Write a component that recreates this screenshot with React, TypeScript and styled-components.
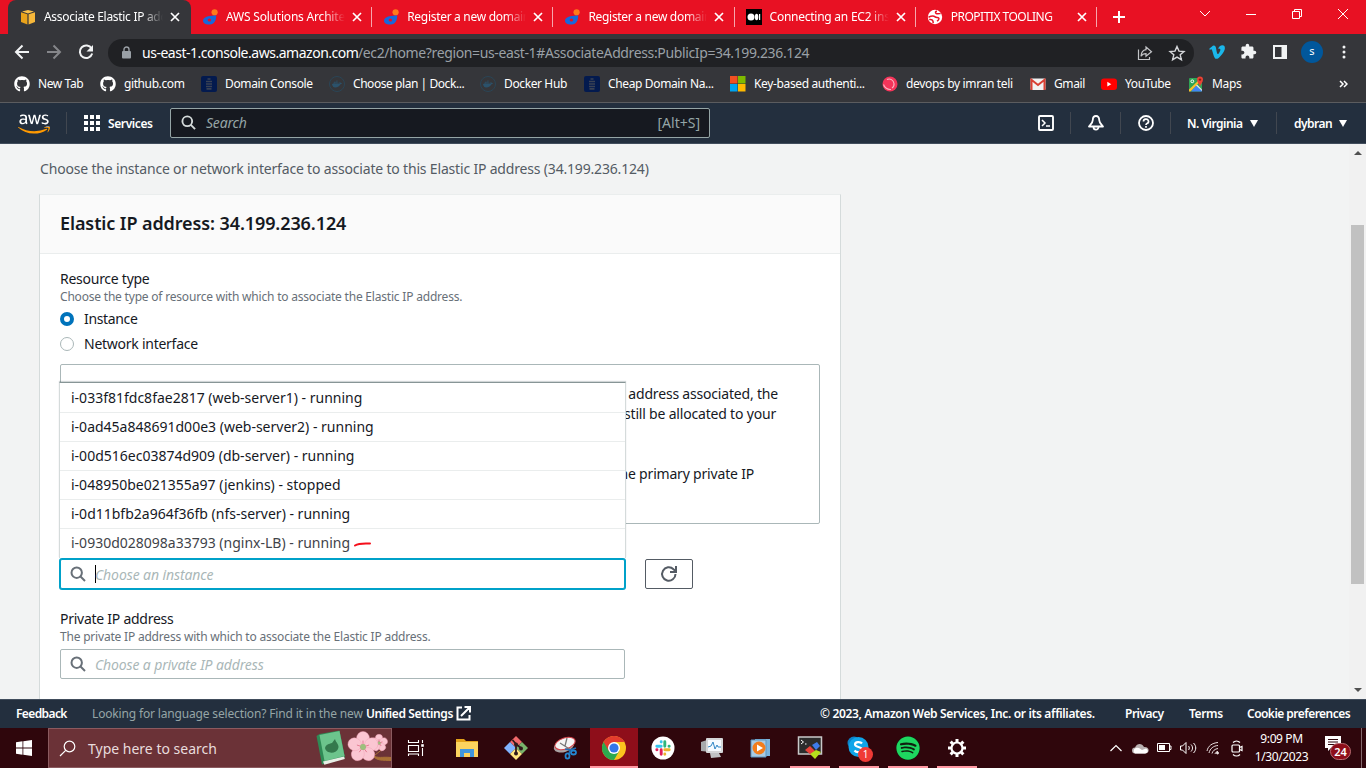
import React from "react";
import styled, { createGlobalStyle, css } from "styled-components";
import { FaAws, FaDocker, FaGithub, FaSpotify, FaVimeoV } from "react-icons/fa";
import { MdExtension } from "react-icons/md";

const UI = `"Noto Sans", "Open Sans", sans-serif`;

const GlobalStyle = createGlobalStyle`
  * { box-sizing: border-box; }
  body { margin: 0; font-family: ${UI}; overflow: hidden; }
  svg { display: block; flex: none; }
`;

const Screen = styled.div`
  width: 1366px;
  height: 768px;
  display: flex;
  flex-direction: column;
  overflow: hidden;
  background: #f2f3f3;
`;

const Txt = styled.span<{ $size?: number; $ls?: number; $w?: number; $color?: string; $bold?: boolean; $italic?: boolean }>`
  flex: none;
  white-space: nowrap;
  font-size: ${(p) => p.$size ?? 12}px;
  letter-spacing: ${(p) => p.$ls ?? 0}px;
  ${(p) => p.$w && css`width: ${p.$w}px;`}
  ${(p) => p.$color && css`color: ${p.$color};`}
  ${(p) => p.$bold && css`font-weight: 600;`}
  ${(p) => p.$italic && css`font-style: italic;`}
`;

/* ---------- Browser chrome ---------- */

const TabStrip = styled.div`
  height: 34px;
  flex: none;
  display: flex;
  padding-left: 8px;
  background: #e81123;
  color: #fff;
`;

const Tab = styled.div<{ $active?: boolean; $divider?: boolean }>`
  position: relative;
  width: ${(p) => (p.$active ? 183 : 181.2)}px;
  margin-right: ${(p) => (p.$active ? -1 : 0)}px;
  flex: none;
  display: flex;
  align-items: center;
  padding-left: 12px;
  border-radius: 8px 8px 0 0;
  background: ${(p) => (p.$active ? "#35363a" : "transparent")};
  ${(p) =>
    p.$divider &&
    css`
      &::after {
        content: "";
        position: absolute;
        right: -1px;
        top: 7px;
        width: 1px;
        height: 20px;
        background: #f6a6ad;
      }
    `}
`;

const TabTitle = styled.div`
  width: 119px;
  margin: 0 6px 0 8px;
  overflow: hidden;
  white-space: nowrap;
  font-size: 12px;
  line-height: 18px;
  mask-image: linear-gradient(to right, #000 98px, transparent 119px);
`;

const NewTab = styled.div`
  display: flex;
  align-items: center;
  padding-left: 16px;
`;

const WindowButtons = styled.div`
  margin-left: auto;
  height: 28px;
  display: flex;
  align-items: center;
  svg { width: 46px; }
`;

const Toolbar = styled.div`
  height: 35px;
  flex: none;
  display: flex;
  align-items: center;
  background: #35363a;
  color: #e8eaed;
`;

const NavButtons = styled.div`
  width: 108px;
  display: flex;
  padding-left: 13px;
  gap: 14px;
`;

const AddressBar = styled.div`
  width: 1086px;
  height: 28px;
  margin-top: 2px;
  border-radius: 14px;
  background: #202124;
  display: flex;
  align-items: center;
  padding: 0 8px 0 13px;
  line-height: 18px;
`;

const Lock = styled.svg`
  margin-right: 10px;
`;

const AddressActions = styled.div`
  margin-left: auto;
  display: flex;
  gap: 14px;
`;

const Extensions = styled.div`
  display: flex;
  align-items: center;
  padding-left: 14px;
`;

const PuzzleSlot = styled.div`
  margin: 0 16px 0 14px;
`;

const MenuDots = styled.svg`
  margin-left: 5px;
`;

const Avatar = styled.div`
  width: 22px;
  height: 22px;
  margin: 0 14px 0 14px;
  border-radius: 50%;
  background: #01579b;
  color: #fff;
  font-size: 11px;
  line-height: 20px;
  text-align: center;
`;

const BookmarkBar = styled.div`
  height: 34px;
  flex: none;
  display: flex;
  align-items: center;
  padding: 0 18px 4px 14px;
  background: #35363a;
  border-bottom: 1px solid #5b5c5f;
  color: #fff;
`;

const Bookmark = styled.div<{ $w: number }>`
  width: ${(p) => p.$w}px;
  flex: none;
  display: flex;
  align-items: center;
  gap: 8px;
`;

const Overflow = styled.div`
  margin-left: auto;
`;

/* ---------- AWS header ---------- */

const AwsNav = styled.div`
  height: 41px;
  flex: none;
  display: flex;
  align-items: center;
  background: #232f3e;
  border-bottom: 1px solid #414d5c;
  color: #fff;
`;

const AwsLogo = styled(FaAws)`
  width: 32px;
  height: 26px;
  margin: 1px 16px 0 18px;
  path { fill: url(#awsTone); }
`;

const NavDivider = styled.div`
  width: 1px;
  height: 22px;
  background: #414750;
`;

const Services = styled.div`
  display: flex;
  align-items: center;
  width: 103px;
  padding-left: 17px;
  gap: 8px;
`;

const NavSearch = styled.div`
  width: 540px;
  height: 30px;
  display: flex;
  align-items: center;
  padding: 0 9px 1px 10px;
  gap: 10px;
  background: #161920;
  border: 1px solid #95a5a6;
  border-radius: 2px;
  color: #95a5a6;
`;

const Shortcut = styled(Txt)`
  margin-left: auto;
`;

const NavRight = styled.div`
  margin-left: auto;
  display: flex;
  align-items: center;
`;

const NavItem = styled.div<{ $w: number; $pl?: number }>`
  width: ${(p) => p.$w}px;
  padding-left: ${(p) => p.$pl ?? 0}px;
  display: flex;
  align-items: center;
  justify-content: ${(p) => (p.$pl ? "flex-start" : "center")};
  gap: 5px;
`;

/* ---------- Page ---------- */

const Page = styled.div`
  height: 555px;
  flex: none;
  display: flex;
  overflow: hidden;
`;

const Main = styled.div`
  flex: 1;
  padding-left: 39px;
  overflow: hidden;
`;

const Intro = styled.div`
  height: 50px;
  padding: 14px 0 0 1px;
  line-height: 20px;
  color: #545b64;
`;

const Card = styled.div`
  width: 802px;
  height: 700px;
  background: #fff;
  border: 1px solid #d5dbdb;
  border-top-color: #eaeded;
`;

const CardHeader = styled.div`
  height: 59px;
  display: flex;
  align-items: center;
  padding: 0 0 2px 20px;
  background: #fafafa;
  border-bottom: 1px solid #eaeded;
  color: #16191f;
`;

const CardBody = styled.div`
  padding: 14px 20px;
  color: #16191f;
`;

const Label = styled.div`
  height: 22px;
  line-height: 22px;
  font-size: 14px;
  letter-spacing: -0.26px;
`;

const Hint = styled.div<{ $gap: number }>`
  height: 14px;
  display: flex;
  align-items: center;
  line-height: 14px;
  margin-bottom: ${(p) => p.$gap}px;
  color: #687078;
`;

const RadioRow = styled.div`
  height: 25px;
  display: flex;
  align-items: center;
  gap: 10px;
  line-height: 18px;
`;

const Radio = styled.span<{ $on?: boolean }>`
  width: 14px;
  height: 14px;
  border-radius: 50%;
  background: #fff;
  border: ${(p) => (p.$on ? "4px solid #0073bb" : "1px solid #aab7b8")};
`;

const Notice = styled.div`
  height: 160px;
  margin: 8px 0 35px;
  padding: 19px 41px 0 0;
  border: 1px solid #aab7b8;
  border-radius: 2px;
`;

const NoticeLine = styled.div<{ $inset: number; $top?: number }>`
  margin-top: ${(p) => p.$top ?? 0}px;
  padding-right: ${(p) => p.$inset}px;
  text-align: right;
  line-height: 20px;
  font-size: 14px;
  letter-spacing: -0.19px;
`;

const InputRow = styled.div`
  display: flex;
  gap: 20px;
  margin-bottom: 19px;
`;

const Combo = styled.div`
  position: relative;
`;

const Field = styled.div<{ $focus?: boolean }>`
  width: 565px;
  height: 30px;
  display: flex;
  align-items: center;
  padding-left: 9px;
  border: 1px solid ${(p) => (p.$focus ? "#00a1c9" : "#aab7b8")};
  border-radius: 2px;
  ${(p) => p.$focus && css`box-shadow: 0 0 0 1px #00a1c9;`}
  background: #fff;
  color: #aab7b8;
`;

const Caret = styled.span<{ $on?: boolean }>`
  width: 1px;
  height: 18px;
  margin: 0 -1px 0 9px;
  background: ${(p) => (p.$on ? "#000" : "transparent")};
`;

const Options = styled.div`
  position: absolute;
  left: -1px;
  bottom: 31px;
  width: 567px;
  height: 176px;
  background: #fff;
  border: 1px solid #d5dbdb;
  border-top: 1px solid #879596;
  border-bottom: 0;
  box-shadow: 0 -1px 1px rgba(0, 28, 36, 0.18);
`;

const Option = styled.div`
  height: 29px;
  display: flex;
  align-items: center;
  padding: 0 0 0 11px;
  line-height: 20px;
  &:first-child { padding-top: 1px; }
  & + & { border-top: 1px solid #eaeded; }
  &:last-child { color: #3f4349; }
`;

const RefreshButton = styled.div`
  width: 48px;
  height: 30px;
  display: flex;
  align-items: center;
  justify-content: center;
  border: 1px solid #545b64;
  border-radius: 2px;
`;

const Scribble = styled.svg`
  margin-left: 3px;
`;

const Scrollbar = styled.div`
  width: 17px;
  display: flex;
  flex-direction: column;
  align-items: center;
  background: #f1f1f1;
`;

const Thumb = styled.div`
  width: 13px;
  height: 359px;
  margin: 68px 0 101px;
  background: #c1c1c1;
`;

const Footer = styled.div`
  height: 29px;
  flex: none;
  display: flex;
  align-items: center;
  padding: 0 16px 1px 16px;
  background: #232f3e;
  border-top: 1px solid #414d5c;
  color: #fff;
`;

const FooterRight = styled.div`
  margin-left: auto;
  display: flex;
`;

/* ---------- Taskbar ---------- */

const Taskbar = styled.div`
  height: 40px;
  flex: none;
  display: flex;
  background: #2f060c;
  color: #fff;
`;

const Start = styled.div`
  width: 48px;
  flex: none;
  display: flex;
  align-items: center;
  justify-content: center;
`;

const TaskSearch = styled.div`
  width: 344px;
  flex: none;
  display: flex;
  align-items: center;
  padding-left: 10px;
  gap: 12px;
  background: #6b3237;
  border: 1px solid #8b5a5f;
  color: #e8dcdd;
`;

const SearchArt = styled.svg`
  margin-left: auto;
`;

const TaskIcon = styled.div<{ $active?: boolean; $open?: boolean; $gap?: number }>`
  position: relative;
  width: 48px;
  flex: none;
  margin-right: ${(p) => p.$gap ?? 1}px;
  display: flex;
  align-items: center;
  justify-content: center;
  background: ${(p) => (p.$active ? "#8e0e1a" : "transparent")};
  &::after {
    content: "";
    position: absolute;
    bottom: 0;
    left: ${(p) => (p.$active ? 0 : 4)}px;
    right: ${(p) => (p.$active ? 0 : 4)}px;
    height: ${(p) => (p.$active || p.$open ? 2 : 0)}px;
    background: #ff98a2;
  }
`;

const SkypeWrap = styled.div`
  position: relative;
`;

const Badge = styled.span`
  position: absolute;
  right: -2px;
  bottom: -2px;
  width: 15px;
  height: 15px;
  border-radius: 50%;
  background: #f03a36;
  font-size: 10px;
  line-height: 15px;
  text-align: center;
`;

const SpotifyDisc = styled.div`
  border-radius: 50%;
  background: #10200f;
`;

const Tray = styled.div`
  margin-left: auto;
  display: flex;
  align-items: center;
  padding-right: 4px;
`;

const TrayIcon = styled.div<{ $w?: number }>`
  width: ${(p) => p.$w ?? 24}px;
  display: flex;
  justify-content: center;
`;

const Clock = styled.div`
  width: 67px;
  text-align: center;
  font-size: 12px;
  line-height: 18px;
  letter-spacing: -0.4px;
  white-space: nowrap;
`;

const Notifications = styled.div`
  position: relative;
  margin-left: 10px;
  width: 26px;
  height: 24px;
`;

const Count = styled.span`
  position: absolute;
  left: 5px;
  top: 7px;
  width: 21px;
  height: 17px;
  border-radius: 9px;
  background: #8e0e1a;
  border: 1px solid #b96a70;
  font-size: 11px;
  line-height: 15px;
  text-align: center;
  font-weight: 600;
`;

const EdgeLine = styled.div`
  width: 1px;
  height: 40px;
  margin-left: 10px;
  background: #84686c;
`;

/* ---------- Icons ---------- */

const CloseX = () => (
  <svg width="12" height="12" viewBox="0 0 12 12" stroke="#fff" strokeWidth="1.7">
    <path d="M2 2l8 8M10 2l-8 8" />
  </svg>
);

const Cube = () => (
  <svg width="16" height="16" viewBox="0 0 16 16">
    <path d="M8 1l6 1.6L8 4.6 2 2.6z" fill="#f9c04b" />
    <path d="M1 3.2l6.4 2V15.4L1 13z" fill="#e9a31b" />
    <path d="M15 3.2l-6.4 2V15.4L15 13z" fill="#f6b73a" />
  </svg>
);

const Drop = () => (
  <svg width="16" height="16" viewBox="0 0 16 16">
    <circle cx="12.6" cy="3.3" r="3.1" fill="#ff7a1a" />
    <path d="M14.2 6.5C10 6.6 1 7 1 11.6c0 2.6 2.500 4 5.600 4 4 0 7.600-1.800 7.600-9.100z" fill="#1868db" />
    <ellipse cx="7.400" cy="11" rx="1.700" ry="1.500" fill="#e81123" />
  </svg>
);

const Medium = () => (
  <svg width="16" height="16" viewBox="0 0 16 16">
    <rect width="16" height="16" fill="#000" />
    <circle cx="5" cy="8" r="3.500" fill="#fff" />
    <ellipse cx="10.600" cy="8" rx="1.700" ry="3.300" fill="#fff" />
    <rect x="13" y="5" width="1.200" height="6" fill="#fff" />
  </svg>
);

const Globe = () => (
  <svg width="16" height="16" viewBox="0 0 16 16">
    <circle cx="8" cy="8" r="7.200" fill="#fff" />
    <path d="M10 2.200C8.500 2 8 3.500 9 4.300s2.800.3 4.600.2M1.500 8.200c2.500-1.200 5.200-1.600 6.600-.3 1 1 2.900.2 3.700 1.200.6.900-.5 2.200-1.800 3M2.200 10.500c1.800-.3 3.300.2 3.700 1.400.3.900 0 1.500.5 2.300" fill="none" stroke="#e81123" strokeWidth="1.500" />
  </svg>
);

const Back = () => (
  <svg width="18" height="18" viewBox="0 0 18 18" fill="none" stroke="#f1f3f4" strokeWidth="2">
    <path d="M16 9H3M9.500 2.500L3 9l6.500 6.500" />
  </svg>
);
const Forward = () => (
  <svg width="18" height="18" viewBox="0 0 18 18" fill="none" stroke="#85868a" strokeWidth="2">
    <path d="M2 9h13M8.500 2.500L15 9l-6.500 6.500" />
  </svg>
);
const Reload = () => (
  <svg width="18" height="18" viewBox="0 0 18 18" fill="none">
    <path d="M14.600 5.500A6.300 6.300 0 1 0 15.200 10.500" stroke="#f1f3f4" strokeWidth="2" />
    <path d="M16 2v6.500H9.500z" fill="#f1f3f4" />
  </svg>
);

const Registrar = () => (
  <svg width="16" height="16" viewBox="0 0 16 16">
    <rect width="16" height="16" rx="2" fill="#031a4e" />
    <path d="M6.500 3h3M5 5.500h6M5 8h6M5 10.500h6M5.500 12.800h5" stroke="#3a4254" strokeWidth="1.700" />
  </svg>
);

const DockerIcon = styled(FaDocker)`
  width: 16px;
  height: 16px;
  padding: 2px;
  color: #2b526b;
  border: 1px solid #2a4556;
  border-radius: 50%;
`;

const Windows4 = () => (
  <svg width="16" height="16" viewBox="0 0 16 16">
    <path d="M0 0h7.500v7.500H0z" fill="#f25022" />
    <path d="M8 0h7.500v7.500H8z" fill="#7fba00" />
    <path d="M0 8h7.500v7.500H0z" fill="#00a4ef" />
    <path d="M8 8h7.500v7.500H8z" fill="#ffb900" />
  </svg>
);

const RedBall = () => (
  <svg width="16" height="16" viewBox="0 0 16 16">
    <circle cx="8" cy="8" r="7.500" fill="#f4355a" />
    <path d="M5 3.500C8 2 11.500 4 12 7.500c.3 2-.5 3.500-2 4.500M1.500 8.500c1 3 4 5.500 7.500 5" fill="none" stroke="#fbb6c2" strokeWidth="1.100" />
  </svg>
);

const Gmail = () => (
  <svg width="16" height="16" viewBox="0 0 16 16">
    <rect x=".5" y="2.500" width="15" height="11.500" rx="1" fill="#f2f2f2" />
    <path d="M1.500 14V3.800L8 9l6.500-5.200V14" fill="none" stroke="#d93f33" strokeWidth="2" />
  </svg>
);

const YouTube = () => (
  <svg width="16" height="16" viewBox="0 0 16 16">
    <rect y="2.500" width="16" height="11.500" rx="3" fill="#f00" />
    <path d="M6.300 5.800v4.800l4-2.400z" fill="#fff" />
  </svg>
);

const Maps = () => (
  <svg width="16" height="16" viewBox="0 0 16 16">
    <rect x="1" y="2" width="13" height="13.500" rx="1" fill="#2fa455" />
    <path d="M3 15.500l5-6 6 5v1z" fill="#4285f4" />
    <path d="M8 7.500l6 6V15l-7-6.500z" fill="#e8eaed" />
    <path d="M1 13.500L12 3l1 1.500L2.500 15.500H1z" fill="#fbc02d" />
    <circle cx="4.300" cy="5.300" r="1.400" fill="none" stroke="#fff" />
    <path d="M12 10.500C11.500 8 9 6.500 9 3.500a3 3 0 0 1 6 0c0 3-2.500 4.500-3 7z" fill="#ea4335" />
    <circle cx="12" cy="3.600" r="1.200" fill="#8c1a11" />
  </svg>
);

const Magnifier = ({ color, size = 16 }: { color: string; size?: number }) => (
  <svg width={size} height={size} viewBox="0 0 16 16" fill="none" stroke={color} strokeWidth="2">
    <circle cx="6.700" cy="6.700" r="5.200" />
    <path d="M10.500 10.500l4.500 4.500" />
  </svg>
);

const Dots9 = () => (
  <svg width="16" height="16" viewBox="0 0 16 16" fill="#fff">
    {[0, 6, 12].map((y) => [0, 6, 12].map((x) => <rect key={`${x}-${y}`} x={x} y={y} width="4" height="4" />))}
  </svg>
);

const Triangle = () => (
  <svg width="8" height="7" viewBox="0 0 8 7">
    <path d="M0 0h8L4 7z" fill="#fff" />
  </svg>
);

const Flower = ({ x, y, r }: { x: number; y: number; r: number }) => (
  <g transform={`translate(${x} ${y})`}>
    {[0, 72, 144, 216, 288].map((a) => (
      <ellipse key={a} cx="0" cy={-r * 0.55} rx={r * 0.4} ry={r * 0.42} fill="#fbc6d2" stroke="#f2a0b5" strokeWidth=".4" transform={`rotate(${a})`} />
    ))}
    {[0, 72, 144, 216, 288].map((a) => (
      <path key={a} d={`M0 0V${-r * 0.4}`} stroke="#e0728a" strokeWidth=".8" transform={`rotate(${a})`} />
    ))}
    <circle r={r * 0.18} fill="#9cc07c" />
  </g>
);

/* ---------- Data ---------- */

const tabs = [
  { icon: <Cube />, title: "Associate Elastic IP address", active: true, ls: -0.3 },
  { icon: <Drop />, title: "AWS Solutions Architect", divider: true, ls: -0.2 },
  { icon: <Drop />, title: "Register a new domain name", divider: true, ls: -0.3 },
  { icon: <Drop />, title: "Register a new domain name", divider: true, ls: -0.3 },
  { icon: <Medium />, title: "Connecting an EC2 instance", divider: true, ls: -0.25 },
  { icon: <Globe />, title: "PROPITIX TOOLING", divider: true, ls: -0.5 },
];

const bookmarks = [
  { icon: <FaGithub size={16} />, text: "New Tab", w: 86, ls: -0.4 },
  { icon: <FaGithub size={16} />, text: "github.com", w: 101, ls: -0.4 },
  { icon: <Registrar />, text: "Domain Console", w: 128, ls: -0.36 },
  { icon: <DockerIcon />, text: "Choose plan | Dock...", w: 151, ls: -0.44 },
  { icon: <DockerIcon />, text: "Docker Hub", w: 104, ls: -0.38 },
  { icon: <Registrar />, text: "Cheap Domain Na...", w: 146, ls: -0.36 },
  { icon: <Windows4 />, text: "Key-based authenti...", w: 152, ls: -0.36 },
  { icon: <RedBall />, text: "devops by imran teli", w: 148, ls: -0.34 },
  { icon: <Gmail />, text: "Gmail", w: 71, ls: -0.4 },
  { icon: <YouTube />, text: "YouTube", w: 87, ls: -0.4 },
  { icon: <Maps />, text: "Maps", w: 60, ls: -0.3 },
];

const instances = [
  "i-033f81fdc8fae2817 (web-server1) - running",
  "i-0ad45a848691d00e3 (web-server2) - running",
  "i-00d516ec03874d909 (db-server) - running",
  "i-048950be021355a97 (jenkins) - stopped",
  "i-0d11bfb2a964f36fb (nfs-server) - running",
  "i-0930d028098a33793 (nginx-LB) - running",
];

const Browser = () => (
  <>
    <TabStrip>
      {tabs.map((t, i) => (
        <Tab key={i} $active={t.active} $divider={t.divider}>
          {t.icon}
          <TabTitle>
            <Txt $ls={t.ls}>{t.title}</Txt>
          </TabTitle>
          <CloseX />
        </Tab>
      ))}
      <NewTab>
        <svg width="14" height="14" viewBox="0 0 14 14" stroke="#fff" strokeWidth="2">
          <path d="M7 1v12M1 7h12" />
        </svg>
      </NewTab>
      <WindowButtons>
        <svg height="12" viewBox="-23 -6 46 12" fill="none" stroke="#fff"><path d="M-5-3l5 5 5-5" /></svg>
        <svg height="12" viewBox="-23 -6 46 12" stroke="#fff"><path d="M-5 .5H5" /></svg>
        <svg height="12" viewBox="-23 -6 46 12" fill="none" stroke="#fff"><path d="M-4.500-2.500h7v7h-7zM-2.500-2.500v-2h7v7h-2" /></svg>
        <svg height="12" viewBox="-23 -6 46 12" stroke="#fff"><path d="M-5-5L5 5M5-5L-5 5" /></svg>
      </WindowButtons>
    </TabStrip>
    <Toolbar>
      <NavButtons><Back /><Forward /><Reload /></NavButtons>
      <AddressBar>
        <Lock width="11" height="14" viewBox="0 0 11 14">
          <rect x="1" y="5" width="9" height="7.500" rx="1" fill="#9aa0a6" />
          <path d="M3 5.500V3.500a2.500 2.500 0 0 1 5 0v2" fill="none" stroke="#9aa0a6" strokeWidth="1.400" />
        </Lock>
        <Txt $size={14} $ls={-0.48} $w={216} $color="#fff">us-east-1.console.aws.amazon.com</Txt>
        <Txt $size={14} $ls={-0.37} $color="#9aa0a6">/ec2/home?region=us-east-1#AssociateAddress:PublicIp=34.199.236.124</Txt>
        <AddressActions>
          <svg width="18" height="18" viewBox="0 0 18 18" fill="none" stroke="#c3c5c8" strokeWidth="1.200">
            <path d="M2.500 5.500v10h11V13M10 3l5.500 4.700L10 12.300V9.700c-2.500 0-4 .9-5 2.600.2-3.500 2-6.300 5-6.700z" />
          </svg>
          <svg width="18" height="18" viewBox="0 0 18 18" fill="none" stroke="#d6d8db" strokeWidth="1.400">
            <path d="M9 2.500l2 4.600 5 .4-3.800 3.300 1.200 4.900L9 13.100l-4.400 2.600 1.200-4.900L2 7.500l5-.4z" />
          </svg>
        </AddressActions>
      </AddressBar>
      <Extensions>
        <FaVimeoV size={18} color="#1ab7ea" />
        <PuzzleSlot><MdExtension size={17} color="#f1f3f4" /></PuzzleSlot>
        <svg width="14" height="14" viewBox="0 0 14 14"><path d="M0 0h14v14H0zM2 2v10h6.500V2z" fill="#f1f3f4" fillRule="evenodd" /></svg>
        <Avatar>s</Avatar>
        <MenuDots width="4" height="14" viewBox="0 0 4 14" fill="#f1f3f4">
          <circle cx="2" cy="2" r="1.500" /><circle cx="2" cy="7" r="1.500" /><circle cx="2" cy="12" r="1.500" />
        </MenuDots>
      </Extensions>
    </Toolbar>
    <BookmarkBar>
      {bookmarks.map((b, i) => (
        <Bookmark key={i} $w={b.w}>
          {b.icon}
          <Txt $ls={b.ls}>{b.text}</Txt>
        </Bookmark>
      ))}
      <Overflow>
        <svg width="9" height="8" viewBox="0 0 9 8" fill="none" stroke="#fff" strokeWidth="1.500"><path d="M1 1l3 3-3 3M5 1l3 3-3 3" /></svg>
      </Overflow>
    </BookmarkBar>
  </>
);

const Header = () => (
  <AwsNav>
    <svg width="0" height="0">
      <defs>
        <linearGradient id="awsTone" gradientUnits="userSpaceOnUse" x1="0" y1="0" x2="0" y2="512">
          <stop offset=".61" stopColor="#fff" />
          <stop offset=".61" stopColor="#ff9900" />
        </linearGradient>
      </defs>
    </svg>
    <AwsLogo />
    <NavDivider />
    <Services>
      <Dots9 />
      <Txt $bold $ls={-0.4}>Services</Txt>
    </Services>
    <NavSearch>
      <Magnifier color="#d5dbdb" size={15} />
      <Txt $size={14} $italic $ls={-0.2}>Search</Txt>
      <Shortcut $size={14}>[Alt+S]</Shortcut>
    </NavSearch>
    <NavRight>
      <NavItem $w={48}>
        <svg width="16" height="16" viewBox="0 0 16 16" fill="none" stroke="#fff" strokeWidth="1.900">
          <rect x="1" y="1" width="14" height="14" rx="1" /><path d="M4 5l3 3-3 3M8 11h4" strokeWidth="1.500" />
        </svg>
      </NavItem>
      <NavDivider />
      <NavItem $w={49}>
        <svg width="16" height="16" viewBox="0 0 16 16" fill="none" stroke="#fff" strokeWidth="1.800" strokeLinejoin="round">
          <path d="M8 1C6 1 4.800 2.500 4.800 5 4.800 7.500 3.500 8.500 1 11.500h14c-2.500-3-3.800-4-3.800-6.500C11.200 2.500 10 1 8 1z" /><path d="M5.500 12a2.500 2.700 0 0 0 5 0" />
        </svg>
      </NavItem>
      <NavDivider />
      <NavItem $w={49}>
        <svg width="16" height="16" viewBox="0 0 16 16" fill="none" stroke="#fff" strokeWidth="1.800">
          <circle cx="8" cy="8" r="7" /><path d="M5.500 6.500a2.500 2.300 0 1 1 3.500 2c-.8.400-1 .7-1 1.500M8 11v1.700" strokeWidth="1.700" />
        </svg>
      </NavItem>
      <NavDivider />
      <NavItem $w={105} $pl={16}>
        <Txt $bold $w={58} $ls={-0.5}>N. Virginia</Txt><Triangle />
      </NavItem>
      <NavDivider />
      <NavItem $w={89} $pl={17}>
        <Txt $bold $w={40} $ls={-0.5}>dybran</Txt><Triangle />
      </NavItem>
    </NavRight>
  </AwsNav>
);

const Content = () => (
  <Page>
    <Main>
      <Intro>
        <Txt $size={14} $ls={-0.18}>Choose the instance or network interface to associate to this Elastic IP address (34.199.236.124)</Txt>
      </Intro>
      <Card>
        <CardHeader>
          <Txt $size={18} $bold $ls={-0.1}>Elastic IP address: 34.199.236.124</Txt>
        </CardHeader>
        <CardBody>
          <Label>Resource type</Label>
          <Hint $gap={2}>
            <Txt $ls={-0.2}>Choose the type of resource with which to associate the Elastic IP address.</Txt>
          </Hint>
          <RadioRow><Radio $on /><Txt $size={14} $ls={-0.35}>Instance</Txt></RadioRow>
          <RadioRow><Radio /><Txt $size={14} $ls={-0.26}>Network interface</Txt></RadioRow>
          <Notice>
            <NoticeLine $inset={0}>an Elastic IP address associated, the</NoticeLine>
            <NoticeLine $inset={2}>but the address will still be allocated to your</NoticeLine>
            <NoticeLine $inset={24} $top={40}>associated with the primary private IP</NoticeLine>
          </Notice>
          <InputRow>
            <Combo>
              <Field $focus>
                <Magnifier color="#687078" />
                <Caret $on />
                <Txt $size={14} $italic $ls={-0.1}>Choose an instance</Txt>
              </Field>
              <Options>
                {instances.map((name, i) => (
                  <Option key={name}>
                    <Txt $size={14}>{name}</Txt>
                    {i === 5 && (
                      <Scribble width="20" height="8" viewBox="0 0 20 8" fill="none" stroke="#f5101c" strokeWidth="2" strokeLinecap="round">
                        <path d="M2 6.500C6 4 9 4.500 17 4.500" />
                      </Scribble>
                    )}
                  </Option>
                ))}
              </Options>
            </Combo>
            <RefreshButton>
              <svg width="18" height="18" viewBox="0 0 18 18" fill="none" stroke="#545b64" strokeWidth="2">
                <path d="M15.500 9A6.700 6.700 0 1 1 13.500 4.200L15.500 6M16 1v6h-6" />
              </svg>
            </RefreshButton>
          </InputRow>
          <Label>Private IP address</Label>
          <Hint $gap={5}>
            <Txt $ls={-0.2}>The private IP address with which to associate the Elastic IP address.</Txt>
          </Hint>
          <Field>
            <Magnifier color="#687078" />
            <Caret />
            <Txt $size={14} $italic $ls={-0.13}>Choose a private IP address</Txt>
          </Field>
        </CardBody>
      </Card>
    </Main>
    <Scrollbar>
      <svg width="8" height="13" viewBox="0 0 8 13"><path d="M0 11l4-4 4 4z" fill="#505050" /></svg>
      <Thumb />
      <svg width="8" height="14" viewBox="0 0 8 14"><path d="M0 3l4 4 4-4z" fill="#505050" /></svg>
    </Scrollbar>
  </Page>
);

const AppIcons = () => (
  <>
    <TaskIcon $gap={3}>
      <svg width="18" height="18" viewBox="0 0 18 18" fill="none" stroke="#fff" strokeWidth="1.100">
        <path d="M1.500 1v2.500h10V1M1.500 6.500h10v6h-10zM1.500 17v-2h10v2M15.500 1v3M15.500 9v8" /><path d="M14.200 5.200h2.600v2.600h-2.600z" fill="#fff" stroke="none" />
      </svg>
    </TaskIcon>
    <TaskIcon>
      <svg width="24" height="20" viewBox="0 0 24 20">
        <path d="M1 1h8l2 2h12v4H1z" fill="#e3a21a" /><rect x="1" y="4" width="22" height="15" fill="#fbd35f" />
        <path d="M5 19v-8h14v8h-4v-4H9v4z" fill="#3f96dd" />
      </svg>
    </TaskIcon>
    <TaskIcon>
      <svg width="24" height="24" viewBox="0 0 24 24">
        <path d="M12 0l6 6-6 6-6-6z" fill="#f0696b" /><path d="M6 6l6 6-6 6-6-6z" fill="#80b3ff" />
        <path d="M18 6l6 6-6 6-6-6z" fill="#79b36b" /><path d="M12 12l6 6-6 6-6-6z" fill="#ffe680" />
        <path d="M8.500 4l3.500 4v10M12 8l5 4" stroke="#2f1a1c" strokeWidth="1.800" fill="none" />
        <g fill="#2f1a1c"><circle cx="12" cy="8.500" r="2" /><circle cx="12" cy="17.500" r="2" /><circle cx="17" cy="12.500" r="2" /></g>
      </svg>
    </TaskIcon>
    <TaskIcon>
      <svg width="24" height="24" viewBox="0 0 24 24" fill="none">
        <ellipse cx="11" cy="10" rx="10.500" ry="6" fill="#a9a2a3" transform="rotate(-18 11 10)" />
        <ellipse cx="12" cy="7.500" rx="10.500" ry="5.500" fill="#f5f5f5" stroke="#d5434a" transform="rotate(-18 12 7.500)" />
        <path d="M14 2l-2 8M7 7l11 7" stroke="#777" strokeWidth="1.300" />
        <path d="M12 13l5 1 6-2M17 14l-1 4" stroke="#1d6fb8" strokeWidth="1.500" />
        <ellipse cx="14.500" cy="20" rx="2" ry="2.600" stroke="#2387d1" strokeWidth="1.800" /><ellipse cx="20.500" cy="16.500" rx="2.500" ry="2" stroke="#2387d1" strokeWidth="1.800" />
      </svg>
    </TaskIcon>
    <TaskIcon $active>
      <svg width="24" height="24" viewBox="0 0 24 24">
        <circle cx="12" cy="12" r="12" fill="#fcc31e" />
        <path d="M12 12L1.600 6A12 12 0 0 0 12 24l5.200-9z" fill="#2da94f" />
        <path d="M12 6h10.400A12 12 0 0 0 1.600 6l5.200 9z" fill="#e33b2e" />
        <circle cx="12" cy="12" r="6" fill="#fff" /><circle cx="12" cy="12" r="4.600" fill="#3476e8" />
      </svg>
    </TaskIcon>
    <TaskIcon>
      <svg width="24" height="24" viewBox="0 0 24 24" strokeWidth="2.900" strokeLinecap="round">
        <circle cx="12" cy="12" r="11.500" fill="#fff" />
        <path d="M5.800 10.200h4.400M10.200 5.800v.3" stroke="#36c5f0" /><path d="M13.800 5.800v4.400M18 10.200h.2" stroke="#2eb67d" />
        <path d="M13.800 13.800h4.400M13.800 18v.2" stroke="#ecb22e" /><path d="M10.200 13.800v4.400M5.800 13.800h.2" stroke="#e01e5a" />
      </svg>
    </TaskIcon>
    <TaskIcon>
      <svg width="24" height="22" viewBox="0 0 24 22">
        <path d="M1 5l9-3v13l-9-1z" fill="#a7aaad" /><rect x="6" y="1" width="17" height="15" rx="1" fill="#d4d6d8" />
        <rect x="8" y="3" width="13" height="11" fill="#f7fbff" /><path d="M8 10l3-1 2-4 2 7 2-4 1 2h3" fill="none" stroke="#3287c6" />
        <path d="M10 16h9l2 4-10 1z" fill="#c0c2c4" />
      </svg>
    </TaskIcon>
    <TaskIcon>
      <svg width="22" height="20" viewBox="0 0 22 20">
        <path d="M5 1h15v17H5z" fill="#7bb3dc" /><path d="M1 2h15v17H1z" fill="#a9cbe4" stroke="#5c96c2" />
        <circle cx="9" cy="10" r="6.500" fill="#f27d1d" /><path d="M7 6.500v7l6-3.500z" fill="#fff" />
      </svg>
    </TaskIcon>
    <TaskIcon $open>
      <svg width="26" height="24" viewBox="0 0 26 24">
        <rect x="1.500" y="1" width="23" height="17" fill="#2c2c2c" stroke="#c9c9c9" strokeWidth="1.500" />
        <path d="M4 4l2.500 2L4 8M8 8h1.500" fill="none" stroke="#fff" />
        <path d="M8 14l5-4 5 5-4 4z" fill="#e8423a" /><path d="M15 9l5-3 3 4-4 4z" fill="#3e7bea" /><path d="M13 18l6-4 5 2-6 7z" fill="#b6e01c" />
      </svg>
    </TaskIcon>
    <TaskIcon $open>
      <SkypeWrap>
        <svg width="24" height="24" viewBox="0 0 24 24">
          <circle cx="7" cy="7" r="6.500" fill="#0c82c8" /><circle cx="15" cy="15" r="6.500" fill="#0c82c8" /><circle cx="11.500" cy="11" r="10" fill="#0fa5e9" />
          <path d="M15 7.500C13.500 5.500 8 5.500 8 8.500s7 2 7 5-5.500 3.500-7.500 1" fill="none" stroke="#fff" strokeWidth="2.200" />
        </svg>
        <Badge>1</Badge>
      </SkypeWrap>
    </TaskIcon>
    <TaskIcon $open><SpotifyDisc><FaSpotify size={24} color="#1ed760" /></SpotifyDisc></TaskIcon>
    <TaskIcon $open>
      <svg width="20" height="20" viewBox="-10 -10 20 20" fill="none" stroke="#fff">
        <circle r="5.500" strokeWidth="2.200" />
        {[0, 45, 90, 135, 180, 225, 270, 315].map((a) => (
          <path key={a} d="M0-6v-3" strokeWidth="3" transform={`rotate(${a})`} />
        ))}
      </svg>
    </TaskIcon>
  </>
);

const Desktop = () => (
  <Taskbar>
    <Start>
      <svg width="16" height="16" viewBox="0 0 16 16" fill="#fff">
        <path d="M0 2.200l6.500-.9v6.300H0zM7.300 1.200L16 0v7.600H7.300zM0 8.400h6.500v6.300L0 13.800zM7.300 8.400H16V16l-8.700-1.200z" />
      </svg>
    </Start>
    <TaskSearch>
      <svg width="17" height="17" viewBox="0 0 17 17" fill="none" stroke="#fff" strokeWidth="1.200"><circle cx="10.500" cy="6.500" r="5.300" /><path d="M6.700 10.300L1 16" /></svg>
      <Txt $size={14}>Type here to search</Txt>
      <SearchArt width="75" height="38" viewBox="317 729 75 38">
        <path d="M317.500 736l3-2 20-3.500 5.500 27-23 7z" fill="#2f8a55" /><path d="M320.500 735l20-4 5 25-20 5z" fill="#6cc48c" />
        <path d="M324 761.500l21-5 .8 2.600-20.500 5.600z" fill="#e8efe6" />
        <path d="M326 748c1-4 4-4 7-5l3-4c1 4 5 6 3 10-2 5-12 5-13-1z" fill="#34794d" />
        <path d="M373 755c6 4 10 1.500 19 2.500v3c-8-.5-14 1-19-5.500zM376 755l9-7" fill="#a87035" stroke="#a87035" strokeWidth="1" />
        <Flower x={380} y={743} r={9} />
        <Flower x={364} y={747} r={16} />
      </SearchArt>
    </TaskSearch>
    <AppIcons />
    <Tray>
      <TrayIcon><svg width="12" height="8" viewBox="0 0 12 8" fill="none" stroke="#fff" strokeWidth="1.200"><path d="M.5 7L6 1.500 11.500 7" /></svg></TrayIcon>
      <TrayIcon>
        <svg width="17" height="11" viewBox="0 0 17 11"><path d="M3 10.500a3 3 0 0 1 0-6C5 0 10 0 12 4c6-.5 6 6.500 1 6.500z" fill="#b9b0b1" /><path d="M3 10.500a3 3 0 0 1 1-5.500c3-1 4 1 6 2l4-1.500c3 1 2 5-1 5z" fill="#fff" /></svg>
      </TrayIcon>
      <TrayIcon>
        <svg width="15" height="10" viewBox="0 0 15 10"><path d="M.5.5h12v8H.500zM12.500 3H14v3.500h-1.500" fill="none" stroke="#fff" /><rect x="2" y="2" width="6" height="5" fill="#fff" /></svg>
      </TrayIcon>
      <TrayIcon>
        <svg width="17" height="14" viewBox="0 0 17 14" fill="none" stroke="#fff"><path d="M.5 5v4h2l3.500 3.500v-11L2.500 5zM8.500 5c1 1 1 3 0 4M11 3.500c2 2 2 5 0 7M13.500 2c3 3 3 7 0 10" /></svg>
      </TrayIcon>
      <TrayIcon $w={25}>
        <svg width="14" height="14" viewBox="0 0 14 14" fill="none" stroke="#e9dfe0"><path d="M1 10C2 5 6 2 12 1.500M3 12C4 7.500 7.500 4.800 12 4.500M6 12.500c.5-2.500 3-4.700 6-5M9 13c.3-1.500 1.500-2.400 3-2.500" /><circle cx="11.500" cy="12" r="1" fill="#fff" /></svg>
      </TrayIcon>
      <TrayIcon $w={23}>
        <svg width="12" height="17" viewBox="0 0 12 17" fill="none" stroke="#fff" strokeWidth="1.200"><rect x="1" y="5" width="7.500" height="7" rx="1" /><path d="M8.500 7.500l2.500-1v4l-2.500-1M2 2.500c2-2 5-2 7 0M2 14.500c2 2 5 2 7 0" /></svg>
      </TrayIcon>
      <Clock>9:09 PM<br />1/30/2023</Clock>
      <Notifications>
        <svg width="16" height="16" viewBox="0 0 16 16"><path d="M0 0h16v12H6l-3 3v-3H0z" fill="#fff" /><path d="M3 3.500h10M3 6h10M3 8.500h7" stroke="#2f060c" strokeWidth="1" /></svg>
        <Count>24</Count>
      </Notifications>
      <EdgeLine />
    </Tray>
  </Taskbar>
);

export default function App() {
  return (
    <Screen>
      <GlobalStyle />
      <Browser />
      <Header />
      <Content />
      <Footer>
        <Txt $bold $w={76} $ls={-0.6}>Feedback</Txt>
        <Txt $w={274} $color="#95a5a6" $ls={-0.16}>Looking for language selection? Find it in the new</Txt>
        <Txt $bold $w={90} $ls={-0.4}>Unified Settings</Txt>
        <svg width="15" height="15" viewBox="0 0 15 15" fill="none" stroke="#fff" strokeWidth="2"><path d="M6 1.500H1.500v12h12V9M8.500 1H14v5.500M14 1L5 10" /></svg>
        <FooterRight>
          <Txt $bold $w={305} $ls={-0.34}>© 2023, Amazon Web Services, Inc. or its affiliates.</Txt>
          <Txt $bold $w={64} $ls={-0.5}>Privacy</Txt>
          <Txt $bold $w={58} $ls={-0.4}>Terms</Txt>
          <Txt $bold $w={103} $ls={-0.53}>Cookie preferences</Txt>
        </FooterRight>
      </Footer>
      <Desktop />
    </Screen>
  );
}
